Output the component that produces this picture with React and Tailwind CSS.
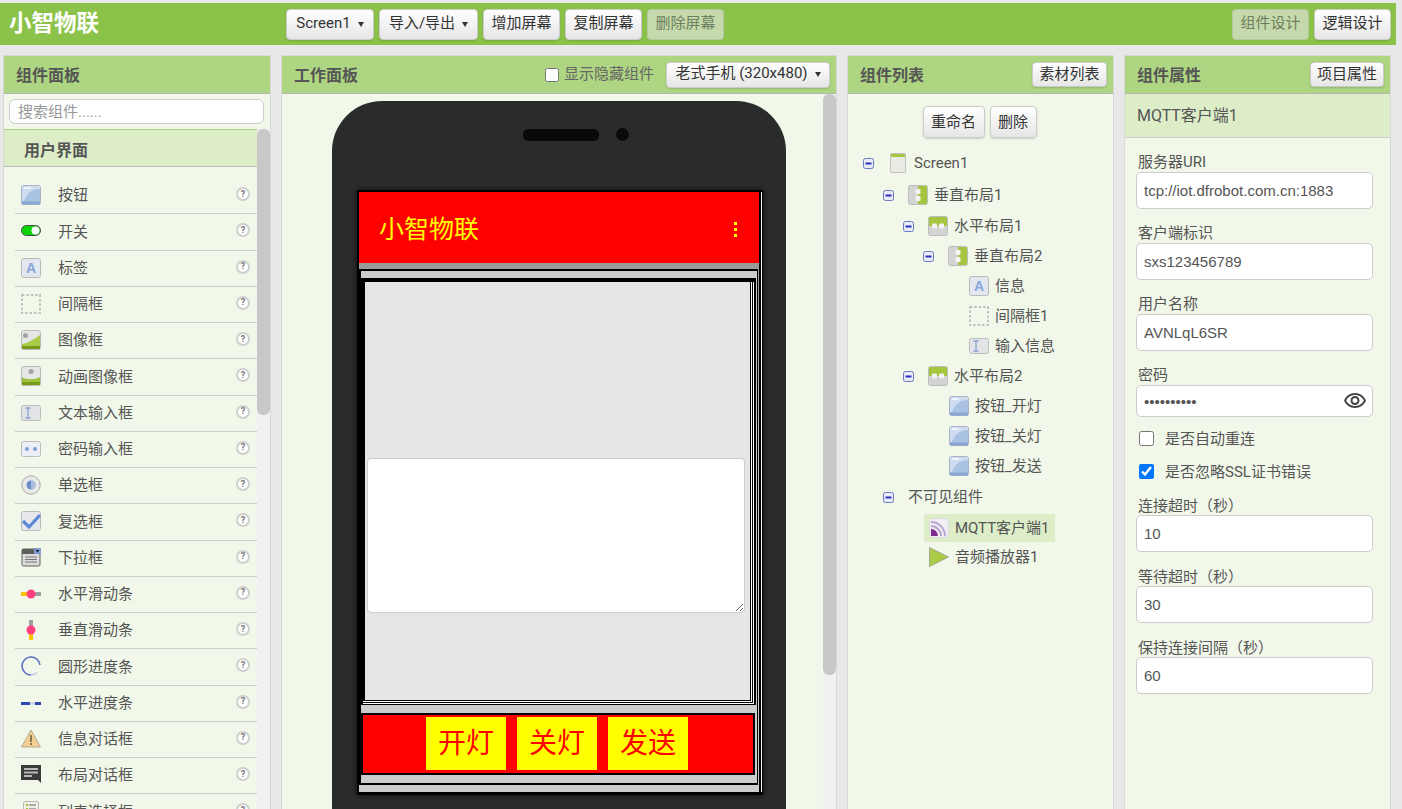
const btnBase =
  "inline-flex items-center justify-center rounded-[4px] border border-[#ccc] bg-linear-to-b from-white to-[#e6e6e6] pb-[2px] text-[15px] text-[#333] shadow-[0_1px_2px_rgba(0,0,0,0.15)] whitespace-nowrap";
const btnOff =
  "inline-flex items-center justify-center rounded-[4px] border border-[#b5c9a0] bg-[#c5d9ac] pb-[2px] text-[15px] text-[#6f8060] whitespace-nowrap";

const Caret = () => <span className="mt-[2px] ml-[7px] h-0 w-0 border-x-[3px] border-t-[5px] border-x-transparent border-t-[#333]" />;

// icons ---------------------------------------------------------------------
const Box = ({ children, fill = "#e3e8f0" }) => (
  <svg width="20" height="20" viewBox="0 0 20 20" className="shrink-0">
    <rect x="0.5" y="0.5" width="19" height="19" rx="2" fill={fill} stroke="#b9b9b9" />
    {children}
  </svg>
);
const IconButton = () => (
  <svg width="20" height="20" viewBox="0 0 20 20" className="shrink-0">
    <rect x="0.5" y="0.5" width="19" height="19" rx="2" fill="#a9c2e4" stroke="#a8b4c6" />
    <path d="M1 1h18v3C11 4 6 8 3 16H1z" fill="#cfdcf0" />
    <rect x="3" y="2" width="7" height="2" fill="#eef3fb" />
    <rect x="1" y="16.5" width="18" height="3" fill="#8aa5cf" />
  </svg>
);
const IconSwitch = () => (
  <svg width="20" height="20" viewBox="0 0 20 20" className="shrink-0">
    <rect x="0.5" y="4.5" width="19" height="10" rx="5" fill="#08d408" stroke="#4a4a4a" />
    <circle cx="14.5" cy="9.5" r="4" fill="#fff" />
  </svg>
);
const IconLabel = () => (
  <Box>
    <text x="10" y="15" textAnchor="middle" fontSize="14" fontWeight="700" fill="#86a6dc" fontFamily="Liberation Sans">A</text>
  </Box>
);
const IconSpacer = () => (
  <svg width="20" height="20" viewBox="0 0 20 20" className="shrink-0">
    <rect x="1" y="1" width="18" height="18" fill="none" stroke="#c0c0c0" strokeWidth="2" strokeDasharray="2.4 2" />
  </svg>
);
const IconImage = ({ center }) => (
  <svg width="20" height="20" viewBox="0 0 20 20" className="shrink-0">
    <rect x="0.5" y="0.5" width="19" height="19" rx="2" fill="#e6e6e6" stroke="#b9b9b9" />
    <circle cx={center ? 10 : 4.5} cy="5.5" r="2.5" fill="#a2a2a2" />
    {center ? (
      <path d="M1 11c4 3 12 3 18 0v8H1z" fill="#9cc23c" />
    ) : (
      <path d="M1 14C7 13 12 10 19 5v14H1z" fill="#a9cb45" />
    )}
    <rect x="1" y="16" width="18" height="3" fill="#769b19" />
  </svg>
);
const IconText = () => (
  <svg width="20" height="20" viewBox="0 0 20 20" className="shrink-0">
    <rect x="0.5" y="2.5" width="19" height="15" rx="2" fill="#e3e4e8" stroke="#bdbdbd" />
    <path d="M4.5 5h5M4.5 15h5M7 5v10" stroke="#8ba3cd" strokeWidth="1.3" fill="none" />
  </svg>
);
const IconPassword = () => (
  <svg width="20" height="20" viewBox="0 0 20 20" className="shrink-0">
    <rect x="0.5" y="2.5" width="19" height="15" rx="2" fill="#eceff5" stroke="#bdbdbd" />
    <circle cx="6" cy="10" r="2" fill="#7e9fd8" />
    <circle cx="14" cy="10" r="2" fill="#7e9fd8" />
  </svg>
);
const IconRadio = () => (
  <svg width="20" height="20" viewBox="0 0 20 20" className="shrink-0">
    <circle cx="10" cy="10" r="9.2" fill="#e8e8e8" stroke="#aaa" />
    <circle cx="10" cy="10" r="4.5" fill="#6d8cc4" />
    <path d="M10 5.5a4.5 4.5 0 0 1 0 9z" fill="#a9bde0" />
  </svg>
);
const IconCheck = () => (
  <Box fill="#e6e8ec">
    <path d="M2 10l6 6L19 4" stroke="#5d8ad4" strokeWidth="3.2" fill="none" />
  </Box>
);
const IconSelect = () => (
  <svg width="20" height="20" viewBox="0 0 20 20" className="shrink-0">
    <rect x="1" y="1" width="18" height="17" rx="1.5" fill="#dcdcdc" stroke="#5e5e5e" />
    <rect x="1" y="1" width="18" height="5" fill="#5e5e5e" />
    <rect x="13" y="0" width="7" height="6" fill="#7f9ad0" />
    <path d="M14.8 2h3.4l-1.7 2.4z" fill="#111" />
    <path d="M4 9h12M4 11.5h12M4 14h12" stroke="#777" />
  </svg>
);
const IconHSlider = () => (
  <svg width="20" height="20" viewBox="0 0 20 20" className="shrink-0">
    <rect x="0" y="8" width="8" height="4" fill="#ffc107" />
    <rect x="10" y="8" width="10" height="4" fill="#9e9e9e" />
    <circle cx="10" cy="10" r="4.5" fill="#ff4081" />
  </svg>
);
const IconVSlider = () => (
  <svg width="20" height="20" viewBox="0 0 20 20" className="shrink-0">
    <rect x="8" y="0" width="4" height="10" fill="#9e9e9e" />
    <rect x="8" y="10" width="4" height="10" fill="#ffc107" />
    <circle cx="10" cy="10" r="4.5" fill="#ff4081" />
  </svg>
);
const IconCircle = () => (
  <svg width="20" height="20" viewBox="0 0 20 20" className="shrink-0">
    <path d="M19 9a9 9 0 1 0-9 10" stroke="#5b6fc4" strokeWidth="1.6" fill="none" />
    <path d="M10 19a9 9 0 0 0 6-2.4" stroke="#c4cde8" strokeWidth="1.6" fill="none" />
  </svg>
);
const IconLinear = () => (
  <svg width="20" height="20" viewBox="0 0 20 20" className="shrink-0">
    <rect x="0" y="9" width="9" height="3" fill="#2f46b5" />
    <rect x="9" y="9.5" width="5" height="2" fill="#c5cbe6" />
    <rect x="14" y="9" width="6" height="3" fill="#2f46b5" />
  </svg>
);
const IconWarn = () => (
  <svg width="20" height="20" viewBox="0 0 20 20" className="shrink-0">
    <path d="M10 1l9.5 17H.5z" fill="#f5cf92" stroke="#b3aa95" />
    <path d="M9 6h2v7H9zM9 14h2v2H9z" fill="#8a7a5c" />
  </svg>
);
const IconDialog = () => (
  <svg width="20" height="20" viewBox="0 0 20 20" className="shrink-0">
    <path d="M0 0h20v18l-3-3H0z" fill="#3a3a3a" />
    <path d="M3 3h14v2H3zM3 6.5h14v2H3zM3 10h8v2H3z" fill="#b9b9b9" />
  </svg>
);
const IconList = () => (
  <svg width="20" height="20" viewBox="0 0 20 20" className="shrink-0">
    <rect x="2.5" y="0.5" width="15" height="19" rx="1.5" fill="#eef0e4" stroke="#b9b9b9" />
    <path d="M5 4h2M5 8h2M5 12h2" stroke="#9cc23c" strokeWidth="2" />
    <path d="M8 4h7M8 8h7M8 12h7" stroke="#aaa" strokeWidth="2" />
  </svg>
);
const IconHelp = () => (
  <span className="-mt-[2px] flex h-[14px] w-[14px] shrink-0 items-center justify-center rounded-full border-2 border-[#cfcfcf] bg-white text-[9px] leading-none font-bold text-[#777]">?</span>
);
const IconToggle = () => (
  <svg width="11" height="11" viewBox="0 0 11 11" className="shrink-0">
    <rect x="0.5" y="0.5" width="10" height="10" rx="2" fill="#e8ecf6" stroke="#6a78c0" />
    <rect x="2.5" y="4.5" width="6" height="2" fill="#2b2fc0" />
  </svg>
);
const IconScreen = () => (
  <svg width="20" height="20" viewBox="0 0 20 20" className="shrink-0">
    <rect x="2.5" y="0.5" width="15" height="19" rx="1.5" fill="#ebebe6" stroke="#c2c2c2" />
    <rect x="3" y="1" width="14" height="3" fill="#a5c73f" />
  </svg>
);
const IconVertical = () => (
  <svg width="20" height="20" viewBox="0 0 20 20" className="shrink-0">
    <rect x="0.5" y="0.5" width="19" height="19" rx="2" fill="#d3d3d3" stroke="#bdbdbd" />
    <path d="M10 1h9v18h-9z" fill="#a5c73f" />
    <rect x="7.5" y="4" width="5" height="5" rx="1" fill="#f3f3f3" />
    <rect x="7.5" y="11" width="5" height="5" rx="1" fill="#f3f3f3" />
  </svg>
);
const IconHorizontal = () => (
  <svg width="20" height="20" viewBox="0 0 20 20" className="shrink-0">
    <rect x="0.5" y="0.5" width="19" height="19" rx="2" fill="#d3d3d3" stroke="#bdbdbd" />
    <path d="M1 1h18v9H1z" fill="#a5c73f" />
    <rect x="4" y="7.5" width="5" height="5" rx="1" fill="#f3f3f3" />
    <rect x="11" y="7.5" width="5" height="5" rx="1" fill="#f3f3f3" />
  </svg>
);
const IconMqtt = () => (
  <svg width="20" height="20" viewBox="0 0 20 20" className="shrink-0">
    <rect x="0.5" y="0.5" width="19" height="19" rx="3" fill="#f1eef5" stroke="#dcdcdc" />
    <path d="M2 4a14 14 0 0 1 14 14M2 8a10 10 0 0 1 10 10" stroke="#b7a6cf" strokeWidth="2" fill="none" />
    <path d="M2 11a7 7 0 0 1 7 7H2z" fill="#7f2a8c" />
  </svg>
);
const IconPlayer = () => (
  <svg width="20" height="20" viewBox="0 0 20 20" className="shrink-0">
    <path d="M0.5 0.5L19.5 10L0.5 19.5z" fill="#a9cb45" stroke="#a3ab93" />
  </svg>
);

const PALETTE = [
  ["按钮", IconButton],
  ["开关", IconSwitch],
  ["标签", IconLabel],
  ["间隔框", IconSpacer],
  ["图像框", IconImage],
  ["动画图像框", () => <IconImage center />],
  ["文本输入框", IconText],
  ["密码输入框", IconPassword],
  ["单选框", IconRadio],
  ["复选框", IconCheck],
  ["下拉框", IconSelect],
  ["水平滑动条", IconHSlider],
  ["垂直滑动条", IconVSlider],
  ["圆形进度条", IconCircle],
  ["水平进度条", IconLinear],
  ["信息对话框", IconWarn],
  ["布局对话框", IconDialog],
  ["列表选择框", IconList],
];

const TREE = [
  { text: "Screen1", icon: IconScreen, toggle: true, row: "h-[32px] pl-[15px]" },
  { text: "垂直布局1", icon: IconVertical, toggle: true, row: "h-[32px] pl-[35px]" },
  { text: "水平布局1", icon: IconHorizontal, toggle: true, row: "h-[30px] pl-[55px]" },
  { text: "垂直布局2", icon: IconVertical, toggle: true, row: "h-[30px] pl-[75px]" },
  { text: "信息", icon: IconLabel, row: "h-[30px] pl-[121px]" },
  { text: "间隔框1", icon: IconSpacer, row: "h-[30px] pl-[121px]" },
  { text: "输入信息", icon: IconText, row: "h-[30px] pl-[121px]" },
  { text: "水平布局2", icon: IconHorizontal, toggle: true, row: "h-[30px] pl-[55px]" },
  { text: "按钮_开灯", icon: IconButton, row: "h-[30px] pl-[101px]" },
  { text: "按钮_关灯", icon: IconButton, row: "h-[30px] pl-[101px]" },
  { text: "按钮_发送", icon: IconButton, row: "h-[30px] pl-[101px]" },
  { text: "不可见组件", toggle: true, row: "h-[32px] pl-[35px]" },
  { text: "MQTT客户端1", icon: IconMqtt, row: "mt-px h-[28px] ml-[76px] w-[131px] pl-[5px] bg-[#dcedc8]" },
  { text: "音频播放器1", icon: IconPlayer, row: "h-[30px] pl-[81px]" },
];

const Panel = ({ width, title, action, children }) => (
  <section className={`${width} flex h-[760px] shrink-0 flex-col overflow-hidden border border-[#d8d8d8] bg-[#f1f8e9]`}>
    <header className="flex h-[38px] shrink-0 items-center justify-between border-b border-[#b5b5b5] bg-[#aed581] pr-[6px] pl-[12px]">
      <h2 className="pt-[2px] text-base font-bold text-[#555]">{title}</h2>
      {action}
    </header>
    {children}
  </section>
);

const Scrollbar = ({ thumb }) => (
  <div className="w-[13px] shrink-0 bg-[#f1f1f1]">
    <div className={`${thumb} rounded-b-[6px] rounded-t-[6px] bg-[#c8c8c8]`} />
  </div>
);

const Field = ({ label, value, top = "mt-[13px]", gap = "mb-px", type = "text", h = "h-[37px]", children }) => (
  <div className={top}>
    <div className={`${gap} h-5 pt-px pl-[2px] text-[15px] leading-5 text-[#555]`}>{label}</div>
    <div className="relative">
      <input
        type={type}
        defaultValue={value}
        readOnly
        className={`${h} w-[237px] rounded-[5px] border border-[#ccc] bg-white px-[7px] font-['Liberation_Sans',sans-serif] text-[15px] text-[#555] outline-none`}
      />
      {children}
    </div>
  </div>
);

// nested arrangement boxes in the viewer leave those black/white stripes
const MessageArea = () => (
  <div className="mb-0 h-[427px] w-[395px] border-t-4 border-r-2 border-b border-l-2 border-black">
    <div className="h-full border-r border-b border-white">
      <div className="h-full border-r border-b border-black">
        <div className="h-full border-r border-b border-white">
          <div className="h-full border-r border-b border-l-2 border-black bg-[#e6e6e6] pt-[176px] pl-[2px]">
            <textarea
              readOnly
              className="block h-[155px] w-[378px] rounded-[4px] border border-[#ccc] bg-white outline-none"
            />
          </div>
        </div>
      </div>
    </div>
  </div>
);

const Phone = () => (
  <div className="mt-[7px] ml-[50px] h-[760px] w-[454px] rounded-t-[50px] bg-[#2a2c2b] pt-[27px]">
    <div className="flex items-center justify-center gap-[17px] pl-[33px]">
      <div className="h-[12px] w-[76px] rounded-[5px] bg-[#0a0a0a]" />
      <div className="h-[13px] w-[13px] rounded-full bg-[#0a0a0a]" />
    </div>
    <div className="mt-[49px] ml-[25px] w-[406px] border-t-2 border-r border-b-[3px] border-l-2 border-black shadow-[0_0_6px_rgba(0,0,0,0.7)]">
      <div className="border-r border-white bg-black pr-[2px]">
        <div className="bg-[#ccc]">
          <div className="flex h-[71px] items-center justify-between bg-[#f00] pt-[4px] pr-[22px] pl-[20px]">
            <span className="text-[25px] text-[#ff0]">小智物联</span>
            <div className="flex flex-col gap-[3px]">
              <i className="h-[3px] w-[3px] bg-[#ff0]" />
              <i className="h-[3px] w-[3px] bg-[#ff0]" />
              <i className="h-[3px] w-[3px] bg-[#ff0]" />
            </div>
          </div>
          <div className="bg-linear-to-b from-[#999] to-[#ccc] to-50% pt-[6px] pb-[7px]">
            <div className="w-[399px] border-t-2 border-r border-b-2 border-l-2 border-black bg-[#ccc] pt-[7px] pb-[8px]">
              <MessageArea />
              <div className="mt-[8px] flex h-[62px] w-[394px] items-start justify-center gap-[11px] border-2 border-black bg-[#f00] pt-[2px] pr-[2px]">
                {["开灯", "关灯", "发送"].map((label) => (
                  <div key={label} className="flex h-[53px] w-[80px] items-center justify-center bg-[#ff0] text-[28px] text-[#f00]">
                    {label}
                  </div>
                ))}
              </div>
            </div>
          </div>
        </div>
      </div>
    </div>
  </div>
);

export default function App() {
  return (
    <div className="h-[809px] overflow-hidden bg-[#e8e8e8] pt-[3px] font-['Roboto','Noto_Sans_CJK_SC',sans-serif]">
      {/* top toolbar */}
      <div className="flex h-[42px] w-[1396px] items-center bg-[#8bc34a] pr-[5px]">
        <div className="w-[286px] pl-[9px] text-[22.5px] font-bold text-white">小智物联</div>
        <div className="flex flex-1 gap-[5px]">
          <button className={`${btnBase} h-[31px] w-[88px]`}>Screen1<Caret /></button>
          <button className={`${btnBase} h-[31px] w-[99px]`}>导入/导出<Caret /></button>
          <button className={`${btnBase} h-[31px] w-[77px]`}>增加屏幕</button>
          <button className={`${btnBase} h-[31px] w-[77px]`}>复制屏幕</button>
          <button className={`${btnOff} h-[31px] w-[77px]`}>删除屏幕</button>
        </div>
        <div className="flex gap-[5px]">
          <button className={`${btnOff} h-[31px] w-[77px]`}>组件设计</button>
          <button className={`${btnBase} h-[31px] w-[77px]`}>逻辑设计</button>
        </div>
      </div>

      <div className="mt-[10px] flex gap-[10px] pl-[3px]">
        {/* palette */}
        <Panel width="w-[268px]" title="组件面板">
          <div className="h-[35px] shrink-0 px-[5px] pt-[5px]">
            <input
              placeholder="搜索组件......"
              className="h-[25px] w-[255px] rounded-[6px] border border-[#ccc] bg-white px-[8px] text-[15px] outline-none placeholder:text-[#999]"
            />
          </div>
          <div className="flex min-h-0 flex-1">
            <div className="w-[253px] shrink-0">
              <div className="flex h-[38px] items-center border-t border-b border-t-[#aed581] border-b-[#bbb] bg-[#dcedc8] pt-[6px] pl-[20px] text-base font-bold text-[#555]">
                用户界面
              </div>
              <div className="pt-[11px]">
                {PALETTE.map(([name, Icon]) => (
                  <div key={name} className="ml-[11px] flex h-[36.25px] items-center border-b border-[#ccc] pr-[7px] pb-px pl-[6px] text-[15px] text-[#555]">
                    <Icon />
                    <span className="ml-[17px] flex-1 pt-px">{name}</span>
                    <IconHelp />
                  </div>
                ))}
              </div>
            </div>
            <Scrollbar thumb="h-[286px]" />
          </div>
        </Panel>

        {/* viewer */}
        <Panel
          width="w-[556px]"
          title="工作面板"
          action={
            <div className="flex items-center">
              <input type="checkbox" className="h-[14px] w-[14px]" />
              <span className="ml-[5px] text-[15px] text-[#666]">显示隐藏组件</span>
              <button className={`${btnBase} ml-[12px] h-[26px] w-[164px]`}>老式手机 (320x480)<Caret /></button>
            </div>
          }
        >
          <div className="flex min-h-0 flex-1">
            <div className="w-[541px] shrink-0">
              <Phone />
            </div>
            <Scrollbar thumb="h-[581px]" />
          </div>
        </Panel>

        {/* component tree */}
        <Panel
          width="w-[267px]"
          title="组件列表"
          action={<button className={`${btnBase} h-[25px] w-[75px] pt-[2px]`}>素材列表</button>}
        >
          <div className="flex h-[53px] shrink-0 justify-center gap-[5px] pt-[12px] pr-[2px]">
            <button className={`${btnBase} h-[32px] w-[62px] pt-[2px]`}>重命名</button>
            <button className={`${btnBase} h-[32px] w-[47px] pt-[2px]`}>删除</button>
          </div>
          <div>
            {TREE.map(({ text, icon: Icon, toggle, row }) => (
              <div key={text} className={`${row} flex items-center text-[15px] text-[#555]`}>
                {toggle && (
                  <span className="mr-[14px]">
                    <IconToggle />
                  </span>
                )}
                {Icon && (
                  <span className="mr-[6px]">
                    <Icon />
                  </span>
                )}
                <span className="pt-px">{text}</span>
              </div>
            ))}
          </div>
        </Panel>

        {/* properties */}
        <Panel
          width="w-[267px]"
          title="组件属性"
          action={<button className={`${btnBase} h-[25px] w-[74px] pt-[2px]`}>项目属性</button>}
        >
          <div className="flex h-[44px] shrink-0 items-center border-b border-[#ccc] bg-[#dcedc8] pl-[12px] text-base text-[#555]">
            MQTT客户端1
          </div>
          <div className="pl-[11px]">
            <Field label="服务器URI" value="tcp://iot.dfrobot.com.cn:1883" />
            <Field label="客户端标识" value="sxs123456789" />
            <Field label="用户名称" value="AVNLqL6SR" />
            <Field label="密码" value="sxs1234567" type="password" h="h-[32px]">
              <svg width="24" height="24" viewBox="0 0 24 24" className="absolute top-1 left-[207px] text-[#444]" fill="currentColor">
                <path d="M12 6c3.79 0 7.17 2.13 8.82 5.5C19.17 14.87 15.79 17 12 17s-7.17-2.13-8.82-5.5C4.83 8.13 8.21 6 12 6m0-2C7 4 2.73 7.11 1 11.5 2.73 15.89 7 19 12 19s9.27-3.11 11-7.5C21.27 7.11 17 4 12 4zm0 5c1.38 0 2.5 1.12 2.5 2.5S13.38 14 12 14s-2.5-1.12-2.5-2.5S10.62 9 12 9m0-2c-2.48 0-4.5 2.02-4.5 4.5S9.52 16 12 16s4.5-2.02 4.5-4.5S14.48 7 12 7z" />
              </svg>
            </Field>
            <label className="mt-[5px] flex h-[33px] items-center gap-[11px] pl-[3px] text-[15px] text-[#555]">
              <input type="checkbox" className="h-[15px] w-[15px]" />
              <span className="pt-px">是否自动重连</span>
            </label>
            <label className="flex h-[33px] items-center gap-[11px] pl-[3px] text-[15px] text-[#555]">
              <input type="checkbox" defaultChecked className="h-[15px] w-[15px]" />
              <span className="pt-px">是否忽略SSL证书错误</span>
            </label>
            <Field label="连接超时（秒）" value="10" top="mt-[7px]" gap="mb-0" />
            <Field label="等待超时（秒）" value="30" top="mt-[14px]" gap="mb-0" />
            <Field label="保持连接间隔（秒）" value="60" top="mt-[14px]" gap="mb-0" />
          </div>
        </Panel>
      </div>
    </div>
  );
}
